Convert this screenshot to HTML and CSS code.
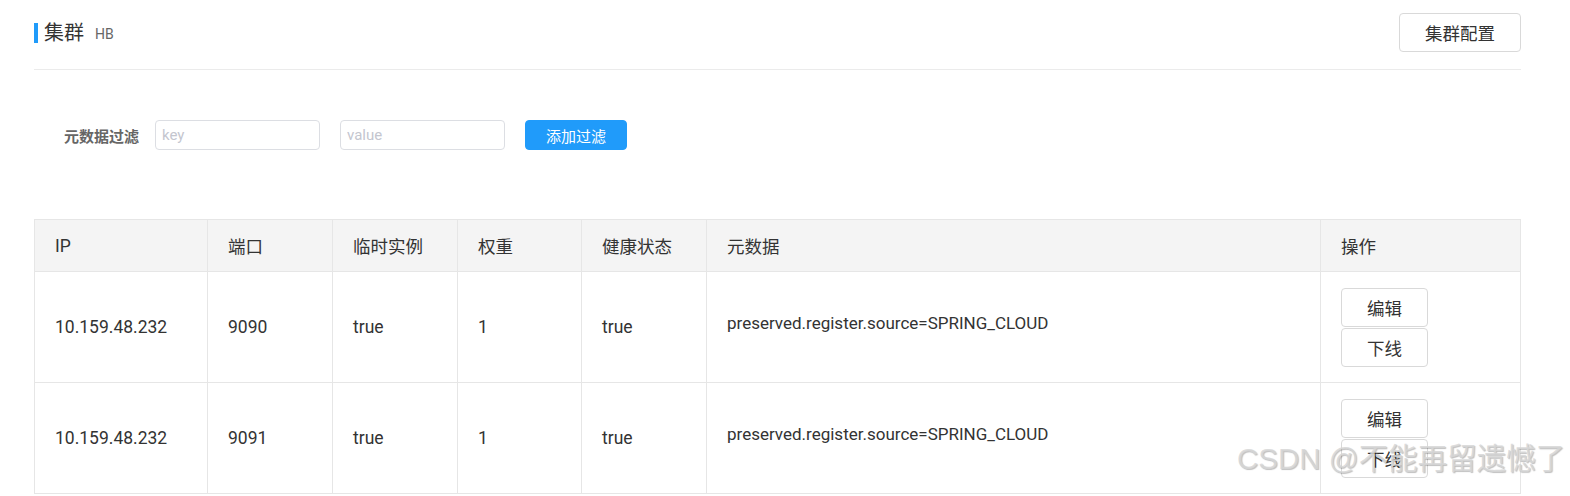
FILE: index.html
```html
<!DOCTYPE html>
<html lang="zh-CN">
<head>
<meta charset="utf-8">
<title>集群</title>
<link rel="stylesheet" href="styles.css">
</head>
<body>
<div class="page">
  <div class="header">
    <div class="title"><span class="title-bar"></span><span class="title-main">集群</span><span class="title-sub">HB</span></div>
    <button class="btn btn-normal btn-lg">集群配置</button>
  </div>
  <div class="filter">
    <span class="filter-label">元数据过滤</span>
    <input class="input" placeholder="key">
    <input class="input" placeholder="value">
    <button class="btn btn-primary">添加过滤</button>
  </div>
  <table class="table">
    <colgroup>
      <col class="c1"><col class="c2"><col class="c3"><col class="c4"><col class="c5"><col class="c6"><col class="c7">
    </colgroup>
    <thead>
      <tr><th>IP</th><th>端口</th><th>临时实例</th><th>权重</th><th>健康状态</th><th>元数据</th><th>操作</th></tr>
    </thead>
    <tbody>
      <tr>
        <td>10.159.48.232</td><td>9090</td><td>true</td><td>1</td><td>true</td>
        <td class="meta">preserved.register.source=SPRING_CLOUD</td>
        <td class="ops"><div class="ops-col"><button class="btn btn-normal btn-op">编辑</button><button class="btn btn-normal btn-op">下线</button></div></td>
      </tr>
      <tr>
        <td>10.159.48.232</td><td>9091</td><td>true</td><td>1</td><td>true</td>
        <td class="meta">preserved.register.source=SPRING_CLOUD</td>
        <td class="ops"><div class="ops-col"><button class="btn btn-normal btn-op">编辑</button><button class="btn btn-normal btn-op">下线</button></div></td>
      </tr>
    </tbody>
  </table>
</div>
<div class="watermark">CSDN @不能再留遗憾了</div>
</body>
</html>
```
FILE: styles.css
```css
html, body {
  margin: 0;
  padding: 0;
  background: #fff;
  overflow: hidden;
}
body {
  font-family: Roboto, "Noto Sans CJK SC", sans-serif;
  color: #333;
}
.page {
  padding: 13px 49px 0 34px;
}
.header {
  display: flex;
  justify-content: space-between;
  align-items: center;
  padding-bottom: 17px;
  border-bottom: 1px solid #ebebeb;
}
.title {
  display: flex;
  align-items: center;
}
.title-bar {
  width: 4px;
  height: 20px;
  background: #209bfa;
  margin-right: 6px;
}
.title-main {
  font-size: 20px;
  line-height: 24px;
  color: #333;
}
.title-sub {
  font-size: 14px;
  color: #666;
  margin-left: 11px;
  margin-top: 3px;
}
.btn {
  font-family: Roboto, "Noto Sans CJK SC", sans-serif;
  box-sizing: border-box;
  border-radius: 4px;
  cursor: pointer;
  padding: 0;
}
.btn-normal {
  background: #fff;
  border: 1px solid #d9d9d9;
  color: #333;
}
.btn-lg {
  width: 122px;
  height: 39px;
  font-size: 17.5px;
}
.filter {
  display: flex;
  align-items: center;
  margin-top: 50px;
  padding-left: 30px;
  height: 30px;
}
.filter-label {
  font-size: 15px;
  font-weight: bold;
  color: #666;
  margin-right: 16px;
}
.input {
  box-sizing: border-box;
  width: 165px;
  height: 30px;
  border: 1px solid #dcdee3;
  border-radius: 4px;
  padding: 0 6px;
  font-size: 15px;
  font-family: Roboto, "Noto Sans CJK SC", sans-serif;
  margin-right: 20px;
  outline: none;
}
.input::placeholder {
  color: #c4c6cf;
}
.btn-primary {
  width: 102px;
  height: 30px;
  background: #209bfa;
  border: 1px solid #209bfa;
  color: #fff;
  font-size: 15px;
}
.table {
  margin-top: 69px;
  width: 1486px;
  border-collapse: collapse;
  table-layout: fixed;
  font-size: 17.5px;
}
.c1 { width: 173px; }
.c2 { width: 125px; }
.c3 { width: 125px; }
.c4 { width: 124px; }
.c5 { width: 125px; }
.c6 { width: 614px; }
.c7 { width: 200px; }
.table th, .table td {
  border: 1px solid #e6e6e6;
  padding: 0 20px;
  text-align: left;
  vertical-align: middle;
  color: #333;
}
.table th {
  height: 51px;
  background: #f4f4f4;
  font-weight: normal;
}
.table td {
  height: 110px;
}
.table td.meta {
  height: 102px;
  font-size: 17px;
  padding-bottom: 8px;
}
.ops-col {
  display: flex;
  flex-direction: column;
  gap: 1px;
}
.btn-op {
  width: 87px;
  height: 39px;
  font-size: 17.5px;
}
.watermark {
  position: absolute;
  left: 1237px;
  top: 435px;
  font-family: "Liberation Sans", "Noto Sans CJK SC", sans-serif;
  font-size: 29.5px;
  color: rgba(215, 215, 215, 0.85);
  text-shadow: 1px 1px 1px rgba(0, 0, 0, 0.25);
  white-space: nowrap;
  pointer-events: none;
}
```
